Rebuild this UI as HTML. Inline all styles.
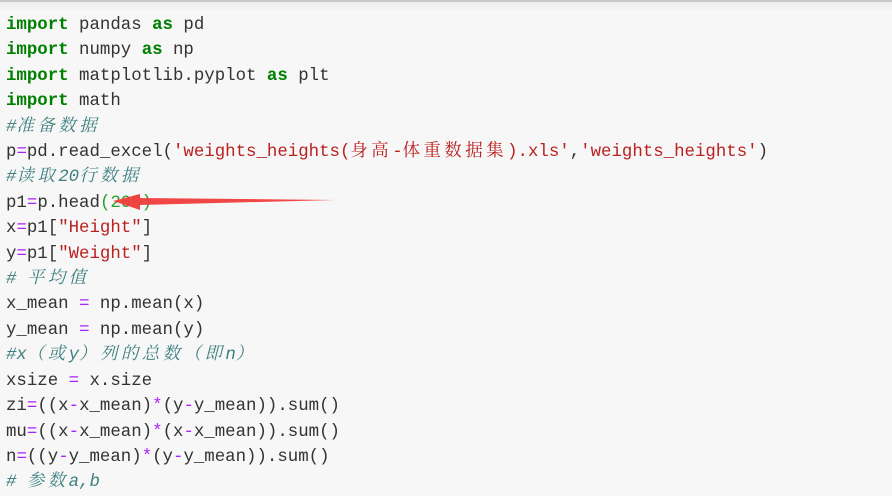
<!DOCTYPE html>
<html><head><meta charset="utf-8"><style>
html,body{margin:0;padding:0;width:892px;height:486px;overflow:hidden;background:#f7f7f7}
.top{position:absolute;left:0;top:0;width:892px;height:2px;background:#c8c8c8}
.sh{position:absolute;left:0;top:2px;width:892px;height:10px;background:linear-gradient(#ececec,#f7f7f7)}
pre{position:absolute;left:6px;top:13px;margin:0;font-family:"Liberation Mono","Noto Serif CJK SC",monospace;font-size:17.4px;line-height:25.4px;color:#333}
.k{color:#008000;font-weight:bold}
.c{color:#408080;font-style:italic}
.s{color:#ba2121}
.o{color:#aa22ff}
.n{color:#2ca02c}
.z{letter-spacing:3.5px}
</style></head><body>
<div class="top"></div><div class="sh"></div>
<pre><span class="k">import</span> pandas <span class="k">as</span> pd
<span class="k">import</span> numpy <span class="k">as</span> np
<span class="k">import</span> matplotlib.pyplot <span class="k">as</span> plt
<span class="k">import</span> math
<span class="c">#<span class="z">准备数据</span></span>
p<span class="o">=</span>pd.read_excel(<span class="s">'weights_heights(<span class="z">身高</span>-<span class="z">体重数据集</span>).xls'</span>,<span class="s">'weights_heights'</span>)
<span class="c">#<span class="z">读取</span>20<span class="z">行数据</span></span>
p1<span class="o">=</span>p.head<span class="n">(200)</span>
x<span class="o">=</span>p1[<span class="s">"Height"</span>]
y<span class="o">=</span>p1[<span class="s">"Weight"</span>]
<span class="c"># <span class="z">平均值</span></span>
x_mean <span class="o">=</span> np.mean(x)
y_mean <span class="o">=</span> np.mean(y)
<span class="c">#x<span class="z">（或</span>y<span class="z">）列的总数（即</span>n<span class="z">）</span></span>
xsize <span class="o">=</span> x.size
zi<span class="o">=</span>((x<span class="o">-</span>x_mean)<span class="o">*</span>(y<span class="o">-</span>y_mean)).sum()
mu<span class="o">=</span>((x<span class="o">-</span>x_mean)<span class="o">*</span>(x<span class="o">-</span>x_mean)).sum()
n<span class="o">=</span>((y<span class="o">-</span>y_mean)<span class="o">*</span>(y<span class="o">-</span>y_mean)).sum()
<span class="c"># <span class="z">参数</span>a,b</span></pre>
<svg style="position:absolute;left:0;top:0" width="892" height="486">
<polygon points="335,200 140,198 140,194 113,201 140,210 140,205" fill="#f03c3c" opacity="0.95"/>
</svg>
</body></html>
